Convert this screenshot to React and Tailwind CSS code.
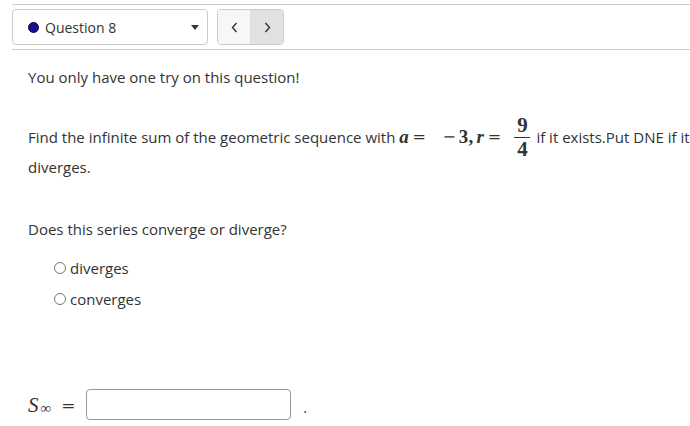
import React from 'react';

const serif = { fontFamily: '"Liberation Serif", "DejaVu Serif", serif' };
const op = { fontFamily: '"DejaVu Serif", "Liberation Serif", serif' };

const Radio = ({ label }) => (
  <label className="flex items-center h-[20px] pl-[54px]">
    <span className="w-[12px] h-[12px] rounded-full border border-[#767676] bg-white mr-[4px]"></span>
    <span>{label}</span>
  </label>
);

const App = () => {
  return (
    <div className="w-[690px] h-[426px] bg-white text-[#333333] text-[15px] overflow-hidden" style={{ fontFamily: '"Open Sans", "Noto Sans", sans-serif' }}>
      {/* header bar */}
      <div className="ml-[12px] mt-[4px] border-t border-b border-[#cccccc] pt-[4px] pb-[4px] flex items-center">
        <div className="w-[196px] h-[36px] border border-[#cccccc] rounded-[4px] bg-white flex items-center pl-[15px] pr-[8px]">
          <span className="w-[11px] h-[11px] rounded-full bg-[#1b0c8e] border border-[#0b0540]"></span>
          <span className="ml-[6px] text-[14px]">Question 8</span>
          <svg className="ml-auto" width="8" height="5" viewBox="0 0 8 5">
            <path d="M0 0 L8 0 L4 5 Z" fill="#333" />
          </svg>
        </div>
        <div className="ml-[9px] h-[36px] w-[67px] flex border border-[#cccccc] rounded-[4px] overflow-hidden">
          <div className="flex-1 bg-[#f7f7f7] flex items-center justify-center border-r border-[#dcdcdc]">
            <svg width="7" height="11" viewBox="0 0 7 11">
              <polyline points="5.5,1 1.5,5.5 5.5,10" fill="none" stroke="#333" strokeWidth="1.4" />
            </svg>
          </div>
          <div className="flex-1 bg-[#e1e1e1] flex items-center justify-center">
            <svg width="7" height="11" viewBox="0 0 7 11">
              <polyline points="1.5,1 5.5,5.5 1.5,10" fill="none" stroke="#333" strokeWidth="1.4" />
            </svg>
          </div>
        </div>
      </div>

      {/* question body */}
      <div className="pl-[28px]">
        <p className="mt-[17px] leading-[20px]">You only have one try on this question!</p>

        <div className="mt-[30px] h-[40px] flex items-center whitespace-nowrap">
          <span>Find the infinite sum of the geometric sequence with</span>
          <span className="flex items-center text-[19px] ml-[3px]" style={serif}>
            <span className="w-[11px] text-center font-bold italic">a</span>
            <span className="ml-[3px] w-[13px] text-center text-[16px]" style={op}>=</span>
            <span className="ml-[17px] w-[10px] text-center text-[16px]" style={op}>−</span>
            <span className="ml-[6px] w-[10px] text-center font-bold">3</span>
            <span className="w-[6px] font-bold">,</span>
            <span className="ml-[2px] w-[7px] text-center font-bold italic">r</span>
            <span className="ml-[4px] w-[14px] text-center text-[16px]" style={op}>=</span>
            <span className="ml-[13px] w-[16px] inline-flex flex-col items-center font-bold text-[21px] leading-[21px]">
              <span>9</span>
              <span className="w-full border-t border-[#333] my-[1px]"></span>
              <span>4</span>
            </span>
          </span>
          <span className="ml-[6px]">if it exists.Put DNE if it</span>
        </div>
        <p className="leading-[20px]">diverges.</p>

        <p className="mt-[42px] leading-[20px]">Does this series converge or diverge?</p>
      </div>

      <div className="mt-[19px] flex flex-col gap-[11px]">
        <Radio label="diverges" />
        <Radio label="converges" />
      </div>

      <div className="mt-[80px] pl-[28px] flex items-center h-[31px]">
        <span className="flex items-end text-[21px] leading-[24px]" style={serif}>
          <span className="italic">S</span>
          <span className="text-[15px] ml-[2px] translate-y-[3px]">∞</span>
          <span className="ml-[10px] w-[14px] text-center text-[17px]" style={op}>=</span>
        </span>
        <input className="ml-[11px] w-[205px] h-[31px] border border-[#999999] rounded-[4px] bg-white" />
        <span className="ml-[12px] text-[14px] translate-y-[3px]">.</span>
      </div>
    </div>
  );
};

export default App;
